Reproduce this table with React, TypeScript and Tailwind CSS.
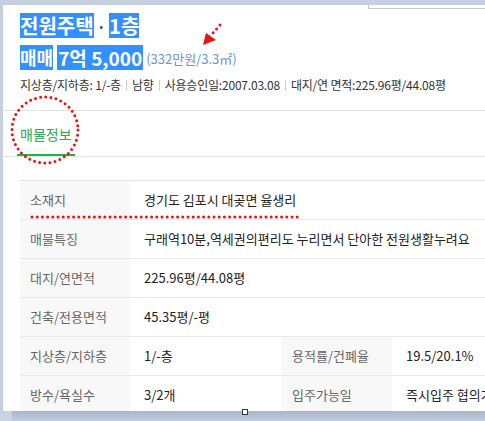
const font = { fontFamily: '"Noto Sans CJK KR", "Noto Sans", sans-serif' };

const rows: { label: string; value: string; label2?: string; value2?: string }[] = [
  { label: "소재지", value: "경기도 김포시 대곶면 율생리" },
  { label: "매물특징", value: "구래역10분,역세권의편리도 누리면서 단아한 전원생활누려요" },
  { label: "대지/연면적", value: "225.96평/44.08평" },
  { label: "건축/전용면적", value: "45.35평/-평" },
  { label: "지상층/지하층", value: "1/-층", label2: "용적률/건폐율", value2: "19.5/20.1%" },
  { label: "방수/욕실수", value: "3/2개", label2: "입주가능일", value2: "즉시입주 협의가능" },
];

const infoItems = [
  "지상층/지하층: 1/-층",
  "남향",
  "사용승인일:2007.03.08",
  "대지/연 면적:225.96평/44.08평",
];

function Annotations() {
  return (
    <svg
      className="pointer-events-none absolute left-0 top-0"
      width={485}
      height={421}
      fill="none"
    >
      <g stroke="#ee1111" strokeWidth={3} strokeLinecap="round" strokeDasharray="0 5.2">
        <ellipse cx={45} cy={130} rx={33} ry={33} />
        <line x1={32} y1={217} x2={298} y2={217} />
        <line x1={220} y1={25} x2={213} y2={33} />
      </g>
      <polygon points="203,45 206,33 216,40" fill="#ee1111" />
    </svg>
  );
}

export default function App() {
  return (
    <div className="relative h-[421px] w-[485px] overflow-hidden bg-[#c6d0e1]" style={font}>
      <div className="pl-[3px] pt-[5px]">
        <div className="h-[406px] w-[540px] overflow-hidden bg-white pt-[8px]">
          <div className="pl-[17px]">
            <div className="flex items-center text-[20px] font-bold text-white">
              <span className="inline-block h-[25px] bg-[#3390ff] leading-[25px]">전원주택</span>
              <span className="mx-[3px] text-[16px] text-[#555]">·</span>
              <span className="inline-block h-[25px] bg-[#3390ff] leading-[25px]">1층</span>
            </div>
            <div className="mt-[7px] flex items-end">
              <span className="inline-block h-[25px] bg-[#3390ff] text-[18px] font-bold leading-[25px] text-white">
                매매
              </span>
              <span className="ml-[4px] inline-block h-[25px] bg-[#3390ff] px-[1px] text-[19px] font-bold leading-[25px] text-white">
                7억 5,000
              </span>
              <span className="mb-[3px] ml-[3px] text-[13px] leading-[16px] text-[#6a93dc]">
                (332만원/3.3㎡)
              </span>
            </div>
            <div className="mt-[7px] flex items-center text-[12px] leading-[16px] tracking-[-0.2px] text-[#333]">
              {infoItems.map((item, i) => (
                <span key={item} className="flex items-center">
                  {i > 0 && <span className="mx-[5px] h-[11px] w-px bg-[#ccc]" />}
                  {item}
                </span>
              ))}
            </div>
          </div>

          <div className="mt-[17px] border-y border-[#e4e4e4]">
            <div className="ml-[14px] inline-block border-b-2 border-[#21b04b] px-[3px] pb-[9px] pt-[12px] text-[14px] leading-[22px] text-[#2fa84f]">
              매물정보
            </div>
          </div>

          <div className="ml-[17px] mt-[23px] border-t border-[#e4e4e4] text-[13px] leading-[18px]">
            {rows.map((row) => (
              <div
                key={row.label}
                className="grid h-[39px] grid-cols-[110px_152px_110px_1fr] border-b border-[#e8e8e8]"
              >
                <div className="flex items-center bg-[#f8f8f8] pl-[10px] text-[#666]">{row.label}</div>
                <div
                  className={
                    row.label2
                      ? "flex items-center whitespace-nowrap pl-[14px] text-[#222]"
                      : "col-span-3 flex items-center whitespace-nowrap pl-[14px] text-[#222]"
                  }
                >
                  {row.value}
                </div>
                {row.label2 && (
                  <>
                    <div className="flex items-center bg-[#f8f8f8] pl-[10px] text-[#666]">{row.label2}</div>
                    <div className="flex items-center whitespace-nowrap pl-[14px] text-[#222]">{row.value2}</div>
                  </>
                )}
              </div>
            ))}
          </div>
        </div>
      </div>
      <div className="flex h-[10px] w-full bg-gradient-to-b from-[#a9b5c9] to-[#c3cde0]">
        <div className="h-full w-[12px] bg-[#cad3e3]" />
      </div>
      <div className="absolute left-[242px] top-[409px] h-[6px] w-[6px] border border-[#333] bg-white" />
      <div className="absolute left-[368px] top-[5px] h-[4px] w-[130px] border-b border-l border-[#c8c8c8] bg-white" />
      <Annotations />
    </div>
  );
}
